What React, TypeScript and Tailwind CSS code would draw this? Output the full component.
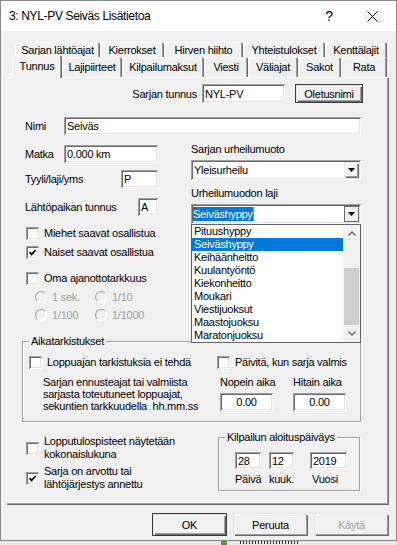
import type React from "react"

const sunken =
  "bg-white shadow-[inset_1px_1px_0_#a0a0a0,inset_-1px_-1px_0_#ffffff,inset_2px_2px_0_#696969,inset_-2px_-2px_0_#e3e3e3]"
const raised =
  "bg-[#f0f0f0] shadow-[inset_1px_1px_0_#e3e3e3,inset_2px_2px_0_#ffffff,inset_-1px_-1px_0_#696969,inset_-2px_-2px_0_#a0a0a0]"
const tabEdge =
  "bg-[#f0f0f0] rounded-t-[3px] shadow-[inset_1px_1px_0_#ffffff,inset_-1px_0_0_#696969,inset_-2px_0_0_#a0a0a0]"
const etched = "border border-[#a0a0a0] shadow-[inset_1px_1px_0_#ffffff,1px_1px_0_#ffffff]"

const lajit = [
  "Pituushyppy",
  "Seiväshyppy",
  "Keihäänheitto",
  "Kuulantyöntö",
  "Kiekonheitto",
  "Moukari",
  "Viestijuoksut",
  "Maastojuoksu",
  "Maratonjuoksu",
]

function Edit({ value = "", className = "", center = false }: { value?: string; className?: string; center?: boolean }) {
  return (
    <div className={`${sunken} ${className} shrink-0 flex items-center px-[3px] ${center ? "justify-center" : ""}`}>
      {value}
    </div>
  )
}

function Check({ checked = false }: { checked?: boolean }) {
  return (
    <div className={`${sunken} w-[13px] h-[13px] shrink-0 flex items-center justify-center`}>
      {checked && (
        <svg width="9" height="9" viewBox="0 0 9 9">
          <path d="M1.5 4.2 L3.6 6.4 L7.6 2" fill="none" stroke="#000" strokeWidth="1.7" />
        </svg>
      )}
    </div>
  )
}

function Radio({ label }: { label: string }) {
  return (
    <div className="w-[60px] flex items-center gap-[5px] text-[#a0a0a0]">
      <div className="w-[12px] h-[12px] shrink-0 rounded-full border border-t-[#a0a0a0] border-l-[#a0a0a0] border-r-white border-b-white bg-[#f0f0f0]" />
      {label}
    </div>
  )
}

function Tab({ label, w, active = false, back = false }: { label: string; w: string; active?: boolean; back?: boolean }) {
  if (active) {
    return <div className={`${w} ${tabEdge} relative z-20 h-[23px] -mb-[1px] shrink-0 text-center leading-[22px]`}>{label}</div>
  }
  if (back) {
    return <div className={`${w} ${tabEdge} h-[18px] shrink-0 text-center leading-[16px]`}>{label}</div>
  }
  return <div className={`${w} ${tabEdge} h-[20px] shrink-0 text-center leading-[20px]`}>{label}</div>
}

function Btn({ label, def = false, disabled = false, className = "" }: { label: string; def?: boolean; disabled?: boolean; className?: string }) {
  return (
    <div
      className={`${className} ${raised} ${def ? "border border-[#3c3c3c]" : ""} ${disabled ? "text-[#a0a0a0]" : ""} shrink-0 flex items-center justify-center`}
    >
      {label}
    </div>
  )
}

function Combo({ value, selected = false, pressed = false }: { value: string; selected?: boolean; pressed?: boolean }) {
  return (
    <div className={`${sunken} w-[170px] h-[20px] flex items-center px-[2px]`}>
      <div className="flex-1 flex items-center">
        {selected ? (
          <span className="bg-[#0078d7] text-white leading-[14px] border-r border-r-[#e08a1e]">{value}</span>
        ) : (
          <span className="pl-[1px]">{value}</span>
        )}
      </div>
      <div
        className={`w-[15px] h-[16px] flex items-center justify-center ${pressed ? "bg-[#f0f0f0] border border-[#696969]" : raised}`}
      >
        <svg width="7" height="4" viewBox="0 0 7 4">
          <path d="M0 0h7L3.5 4z" fill="#000" />
        </svg>
      </div>
    </div>
  )
}

function Chevron({ up }: { up?: boolean }) {
  return (
    <svg width="8" height="5" viewBox="0 0 8 5">
      <path d={up ? "M0.5 4.5 L4 1 L7.5 4.5" : "M0.5 0.5 L4 4 L7.5 0.5"} fill="none" stroke="#606060" strokeWidth="1.3" />
    </svg>
  )
}

function LabelRow({ label, children, mt }: { label: string; children: React.ReactNode; mt: string }) {
  return (
    <div className={`${mt} w-[152px] h-[18px] pl-[19px] flex items-center justify-between`}>
      <span>{label}</span>
      {children}
    </div>
  )
}

export default function App() {
  return (
    <div className="w-[397px] h-[545px] bg-[#e8e8e8] overflow-hidden font-['Liberation_Sans',Arial,sans-serif] text-[11px] tracking-[-0.25px] leading-[14px] text-black">
      <div className="w-[397px] h-[541px] bg-[#f0f0f0] border border-[#888888] flex flex-col">
        {/* title bar */}
        <div className="h-[30px] shrink-0 bg-white flex items-center pl-[8px]">
          <span className="text-[12px] tracking-[-0.35px]">3: NYL-PV Seiväs Lisätietoa</span>
          <span className="ml-auto mr-[34px] text-[14px] tracking-normal">?</span>
          <svg width="11" height="11" viewBox="0 0 11 11" className="mr-[18px]">
            <path d="M0.5 0.5 L10.5 10.5 M10.5 0.5 L0.5 10.5" stroke="#000" strokeWidth="1" />
          </svg>
        </div>

        {/* tabs */}
        <div className="mt-[11px] h-[15px] flex pl-[14px]">
          <Tab back w="w-[85px]" label="Sarjan lähtöajat" />
          <Tab back w="w-[64px]" label="Kierrokset" />
          <Tab back w="w-[79px]" label="Hirven hiihto" />
          <Tab back w="w-[82px]" label="Yhteistulokset" />
          <Tab back w="w-[62px]" label="Kenttälajit" />
        </div>
        <div className="relative z-10 h-[20px] flex items-end pl-[11px]">
          <Tab active w="w-[50px]" label="Tunnus" />
          <Tab w="w-[60px]" label="Lajipiirteet" />
          <Tab w="w-[82px]" label="Kilpailumaksut" />
          <Tab w="w-[44px]" label="Viesti" />
          <Tab w="w-[50px]" label="Väliajat" />
          <Tab w="w-[43px]" label="Sakot" />
          <Tab w="w-[46px]" label="Rata" />
        </div>

        {/* panel */}
        <div className="ml-[5px] w-[383px] h-[428px] shrink-0 flex flex-col shadow-[inset_1px_1px_0_#ffffff,inset_-1px_-1px_0_#696969,inset_-2px_-2px_0_#a0a0a0]">
          <div className="mt-[7px] h-[19px] flex items-center">
            <span className="w-[191px] text-right">Sarjan tunnus</span>
            <Edit value="NYL-PV" className="ml-[5px] w-[83px] h-[19px]" />
            <Btn def label="Oletusnimi" className="ml-[10px] w-[68px] h-[19px]" />
          </div>

          <div className="mt-[14px] h-[18px] pl-[19px] flex items-center">
            <span className="w-[39px]">Nimi</span>
            <Edit value="Seiväs" className="w-[297px] h-[18px]" />
          </div>

          <div className="h-[206px] flex">
            <div className="w-[185px] flex flex-col">
              <LabelRow mt="mt-[10px]" label="Matka">
                <Edit value="0.000 km" className="w-[94px] h-[18px]" />
              </LabelRow>
              <LabelRow mt="mt-[7px]" label="Tyyli/laji/yms">
                <Edit value="P" className="w-[37px] h-[18px]" />
              </LabelRow>
              <LabelRow mt="mt-[10px]" label="Lähtöpaikan tunnus">
                <Edit value="A" className="w-[20px] h-[18px]" />
              </LabelRow>

              <div className="mt-[10px] h-[14px] pl-[20px] flex items-center gap-[5px]">
                <Check />
                Miehet saavat osallistua
              </div>
              <div className="mt-[5px] h-[14px] pl-[20px] flex items-center gap-[5px]">
                <Check checked />
                Naiset saavat osallistua
              </div>
              <div className="mt-[12px] h-[14px] pl-[20px] flex items-center gap-[5px]">
                <Check />
                Oma ajanottotarkkuus
              </div>
              <div className="mt-[5px] h-[14px] pl-[29px] flex items-center">
                <Radio label="1 sek." />
                <Radio label="1/10" />
              </div>
              <div className="mt-[4px] h-[14px] pl-[29px] flex items-center">
                <Radio label="1/100" />
                <Radio label="1/1000" />
              </div>
            </div>

            <div className="flex flex-col">
              <span className="mt-[7px]">Sarjan urheilumuoto</span>
              <div className="mt-[4px]">
                <Combo value="Yleisurheilu" />
              </div>
              <span className="mt-[6px]">Urheilumuodon laji</span>
              <div className="relative mt-[4px]">
                <Combo selected pressed value="Seiväshyppy" />
                <div className="absolute left-0 top-full z-30 w-[170px] h-[119px] bg-white border border-[#646464] flex">
                  <div className="w-[151px] flex flex-col">
                    {lajit.map((l) => (
                      <div
                        key={l}
                        className={`h-[13px] leading-[13px] pl-[2px] ${l === "Seiväshyppy" ? "bg-[#0078d7] text-white" : ""}`}
                      >
                        {l}
                      </div>
                    ))}
                  </div>
                  <div className="w-[17px] bg-[#f0f0f0] flex flex-col">
                    <div className="h-[17px] flex items-center justify-center">
                      <Chevron up />
                    </div>
                    <div className="mt-[26px] mx-[1px] h-[57px] bg-[#cdcdcd]" />
                    <div className="mt-auto h-[17px] flex items-center justify-center">
                      <Chevron />
                    </div>
                  </div>
                </div>
              </div>
            </div>
          </div>

          {/* Aikatarkistukset */}
          <div className={`${etched} ml-[16px] w-[339px] h-[81px] shrink-0 flex flex-col`}>
            <span className="-mt-[8px] ml-[6px] px-[2px] bg-[#f0f0f0] self-start">Aikatarkistukset</span>
            <div className="mt-[7px] h-[14px] pl-[6px] flex items-center">
              <div className="w-[188px] flex items-center gap-[5px]">
                <Check />
                Loppuajan tarkistuksia ei tehdä
              </div>
              <div className="flex items-center gap-[5px]">
                <Check />
                Päivitä, kun sarja valmis
              </div>
            </div>
            <div className="mt-[7px] flex">
              <div className="w-[197px] pl-[20px] leading-[12px]">
                <div>Sarjan ennusteajat tai valmiista</div>
                <div>sarjasta toteutuneet loppuajat,</div>
                <div className="whitespace-pre">sekuntien tarkkuudella  hh.mm.ss</div>
              </div>
              <div className="w-[73px] flex flex-col">
                <span className="leading-[12px]">Nopein aika</span>
                <Edit center value="0.00" className="mt-[5px] w-[53px] h-[18px]" />
              </div>
              <div className="flex flex-col">
                <span className="leading-[12px]">Hitain aika</span>
                <Edit center value="0.00" className="mt-[5px] w-[53px] h-[18px]" />
              </div>
            </div>
          </div>

          <div className="flex">
            <div className="w-[212px] pl-[20px] flex flex-col">
              <div className="mt-[13px] flex items-center gap-[5px]">
                <Check />
                <div className="leading-[13px]">
                  Lopputulospisteet näytetään
                  <br />
                  kokonaislukuna
                </div>
              </div>
              <div className="mt-[4px] flex items-center gap-[5px]">
                <Check checked />
                <div className="leading-[13px]">
                  Sarja on arvottu tai
                  <br />
                  lähtöjärjestys annettu
                </div>
              </div>
            </div>

            <div className={`${etched} mt-[15px] w-[142px] h-[54px] flex flex-col`}>
              <span className="-mt-[8px] ml-[6px] px-[2px] bg-[#f0f0f0] self-start">Kilpailun aloituspäiväys</span>
              <div className="mt-[8px] pl-[16px] flex">
                <div className="w-[34px] flex flex-col">
                  <Edit value="28" className="w-[26px] h-[17px]" />
                  <span className="mt-[3px]">Päivä</span>
                </div>
                <div className="w-[41px] flex flex-col">
                  <Edit value="12" className="w-[25px] h-[17px]" />
                  <span className="mt-[3px]">kuuk.</span>
                </div>
                <div className="flex flex-col">
                  <Edit value="2019" className="w-[37px] h-[17px]" />
                  <span className="mt-[3px] pl-[2px]">Vuosi</span>
                </div>
              </div>
            </div>
          </div>
        </div>

        {/* buttons */}
        <div className="mt-[8px] pl-[151px] flex gap-[6px]">
          <Btn def label="OK" className="w-[75px] h-[23px]" />
          <Btn label="Peruuta" className="w-[75px] h-[23px]" />
          <Btn disabled label="Käytä" className="w-[75px] h-[23px]" />
        </div>
      </div>

      {/* desktop behind the dialog */}
      <div className="h-[4px] flex items-start pl-[221px]">
        <div className="w-[6px] h-[4px] bg-[#5a9e32]" />
        <div className="ml-[13px] w-[60px] h-[3px] bg-[repeating-linear-gradient(90deg,#333333_0_1px,transparent_1px_3px)]" />
      </div>
    </div>
  )
}
